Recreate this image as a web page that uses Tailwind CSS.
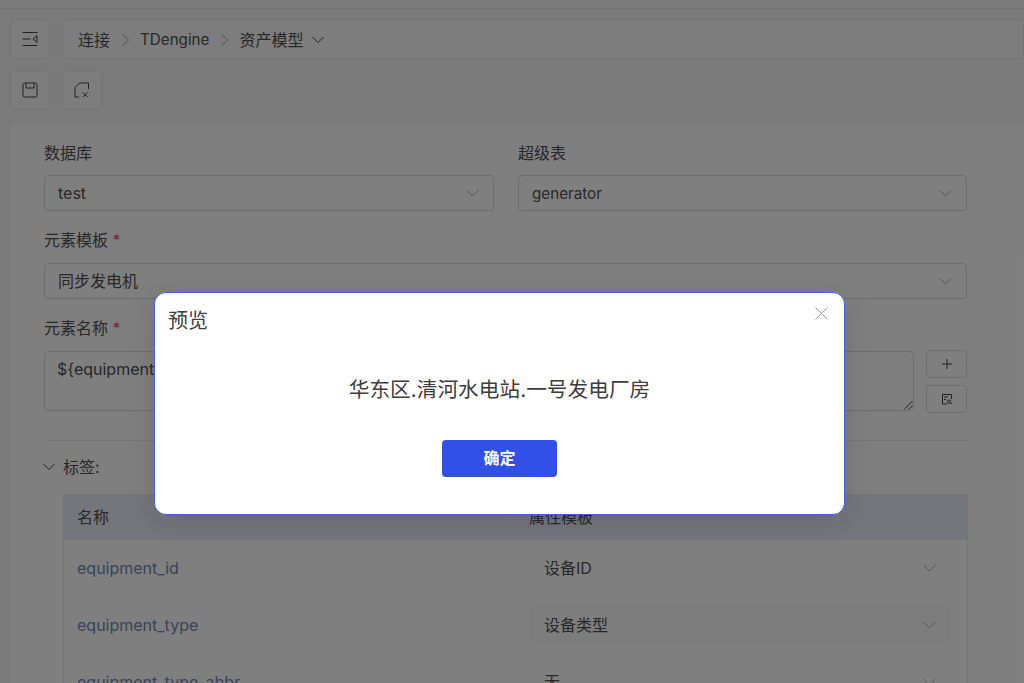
<!DOCTYPE html>
<html lang="zh">
<head>
<meta charset="utf-8">
<script src="https://cdn.jsdelivr.net/npm/@tailwindcss/browser@4"></script>
</head>
<body class="font-['Inter','Noto_Sans_CJK_SC',sans-serif]">
<div class="relative w-[1024px] h-[683px] overflow-hidden bg-[#f5f5f5] text-[16px] text-[#505050]">
  <div class="h-[9px] border-b border-[#e6e6e6] bg-[#f5f5f5]"></div>
  <div class="flex gap-[12px] pl-[10px] mt-[10px]">
    <div class="w-[40px] h-[40px] shrink-0 bg-[#fafafa] border border-[#e8e8e8] rounded-[6px] flex items-center justify-center">
      <svg width="16" height="16" viewBox="0 0 16 16" fill="none" stroke="#444" stroke-width="1"><path d="M0.5 1.5H15.5M0.5 8H8.5M0.5 14.5H15.5M15 4.5L11 8L15 11.5Z"/></svg>
    </div>
    <div class="flex-1 h-[40px] bg-[#fafafa] border border-[#e8e8e8] rounded-l-[6px] flex items-center pl-[15px] pt-[1px]">
      <span>连接</span>
      <svg class="ml-[12px] mr-[11px]" width="7" height="12" viewBox="0 0 7 12" fill="none" stroke="#aaa"><path d="M0.5 0.5L6.5 6L0.5 11.5"/></svg>
      <span class="text-[15.2px] translate-y-[1px]">TDengine</span>
      <svg class="ml-[12px] mr-[11px]" width="7" height="12" viewBox="0 0 7 12" fill="none" stroke="#aaa"><path d="M0.5 0.5L6.5 6L0.5 11.5"/></svg>
      <span>资产模型</span>
      <svg class="ml-[9px]" width="12" height="8" viewBox="0 0 12 8" fill="none" stroke="#444"><path d="M0.5 1L6 6.5L11.5 1"/></svg>
    </div>
  </div>
  <div class="flex gap-[12px] pl-[10px] mt-[11px]">
    <div class="w-[40px] h-[40px] bg-[#fafafa] border border-[#e8e8e8] rounded-[6px] flex items-center justify-center">
      <svg width="16" height="16" viewBox="0 0 16 16" fill="none" stroke="#444"><rect x="1" y="1" width="14" height="14" rx="1.5"/><path d="M4 1V6H12V1" /></svg>
    </div>
    <div class="w-[40px] h-[40px] bg-[#fafafa] border border-[#e8e8e8] rounded-[6px] flex items-center justify-center">
      <svg width="16" height="16" viewBox="0 0 16 16" fill="none" stroke="#444"><path d="M5 15H1V5.5L5.5 1H14.5V7M9 10.5L13.5 15M13.5 10.5L9 15"/></svg>
    </div>
  </div>
  <div class="ml-[10px] mt-[13px] h-[600px] bg-white rounded-tl-[6px] pl-[34px] pr-[57px] pt-[20px]">
    <div class="grid grid-cols-[450px_449px] gap-x-[24px]">
      <div>
        <div class="h-[20px] leading-[20px]">数据库</div>
        <div class="mt-[12px] h-[36px] border border-[#dcdcdc] rounded-[4px] flex items-center justify-between pl-[13px] pr-[14px]"><span>test</span><svg width="13" height="8" viewBox="0 0 13 8" fill="none" stroke="#aaa"><path d="M0.5 1L6.5 7L12.5 1"/></svg></div>
      </div>
      <div>
        <div class="h-[20px] leading-[20px]">超级表</div>
        <div class="mt-[12px] h-[36px] border border-[#dcdcdc] rounded-[4px] flex items-center justify-between pl-[13px] pr-[14px]"><span class="text-[15.2px] translate-y-[1px]">generator</span><svg width="13" height="8" viewBox="0 0 13 8" fill="none" stroke="#aaa"><path d="M0.5 1L6.5 7L12.5 1"/></svg></div>
      </div>
    </div>
    <div class="mt-[19px] h-[20px] leading-[20px]">元素模板 <span class="text-[#e34d59]">*</span></div>
    <div class="mt-[13px] h-[36px] border border-[#dcdcdc] rounded-[4px] flex items-center justify-between pl-[13px] pr-[14px]"><span>同步发电机</span><svg width="13" height="8" viewBox="0 0 13 8" fill="none" stroke="#aaa"><path d="M0.5 1L6.5 7L12.5 1"/></svg></div>
    <div class="mt-[19px] h-[20px] leading-[20px]">元素名称 <span class="text-[#e34d59]">*</span></div>
    <div class="mt-[13px] flex gap-[12px]">
      <div class="relative w-[871px] h-[60px] border border-[#dcdcdc] rounded-[4px] pl-[12px] pt-[7px] leading-[20px]">${equipment_name}
        <svg class="absolute right-0 bottom-0" width="10" height="10" viewBox="0 0 10 10" fill="none" stroke="#444"><path d="M1 9.5L9.5 1M5.5 9.5L9.5 5.5"/></svg>
      </div>
      <div class="flex flex-col gap-[7px] -mt-[1px]">
        <div class="w-[41px] h-[28px] border border-[#dcdcdc] rounded-[4px] flex items-center justify-center"><svg width="12" height="12" viewBox="0 0 12 12" fill="none" stroke="#444"><path d="M6 1V11M1 6H11"/></svg></div>
        <div class="w-[41px] h-[28px] border border-[#dcdcdc] rounded-[4px] flex items-center justify-center"><svg width="12" height="12" viewBox="0 0 12 12" fill="none" stroke="#444"><path d="M6 11H1.5V1.5H10.5V6M3 4H7M3 6.5H5M8 7A1.6 1.6 0 1 0 8 10.2A1.6 1.6 0 1 0 8 7M9.2 9.5L11 11"/></svg></div>
      </div>
    </div>
    <div class="mt-[27px] border-t border-[#eeeeee]"></div>
    <div class="mt-[16px] h-[20px] flex items-center gap-[8px] -ml-[1px]">
      <svg width="12" height="8" viewBox="0 0 12 8" fill="none" stroke="#444"><path d="M0.5 1L6 6.5L11.5 1"/></svg>
      <span>标签:</span>
    </div>
    <div class="mt-[17px] ml-[19px] w-[905px] border-x border-[#e6e8f0]">
      <div class="h-[46px] bg-[#e8edf8] flex items-center">
        <div class="w-[465px] pl-[13px]">名称</div><div>属性模板</div>
      </div>
      <div class="h-[56px] flex items-center">
        <div class="w-[465px] pl-[13px] text-[#7288b5]">equipment_id</div>
        <div class="w-[422px] h-[36px] rounded-[4px] pl-[15px] flex items-center justify-between pr-[15px]"><span>设备ID</span><svg width="13" height="8" viewBox="0 0 13 8" fill="none" stroke="#aaa"><path d="M0.5 1L6.5 7L12.5 1"/></svg></div>
      </div>
      <div class="h-[57px] flex items-center">
        <div class="w-[465px] pl-[13px] text-[#7288b5]">equipment_type</div>
        <div class="w-[422px] h-[36px] bg-[#fafafa] rounded-[4px] pl-[15px] flex items-center justify-between pr-[15px]"><span>设备类型</span><svg width="13" height="8" viewBox="0 0 13 8" fill="none" stroke="#aaa"><path d="M0.5 1L6.5 7L12.5 1"/></svg></div>
      </div>
      <div class="h-[57px] flex items-center">
        <div class="w-[465px] pl-[13px] text-[#7288b5]">equipment_type_abbr</div>
        <div class="w-[422px] h-[36px] rounded-[4px] pl-[15px] flex items-center justify-between pr-[15px]"><span>无</span><svg width="13" height="8" viewBox="0 0 13 8" fill="none" stroke="#aaa"><path d="M0.5 1L6.5 7L12.5 1"/></svg></div>
      </div>
    </div>
  </div>
  <div class="absolute inset-0 bg-black/50"></div>
  <div class="absolute left-[154px] top-[292px] w-[691px] h-[223px] bg-white border border-[#3f5ef0] rounded-[12px] shadow-[0_6px_30px_rgba(0,0,0,0.12)] flex flex-col items-center">
    <div class="self-start pl-[13px] pt-[14px] h-[28px] text-[20px] leading-[28px] text-[#3d3d3d]">预览</div>
    <svg class="absolute right-[16px] top-[14px]" width="13" height="13" viewBox="0 0 13 13" fill="none" stroke="#999"><path d="M0.5 0.5L12.5 12.5M12.5 0.5L0.5 12.5"/></svg>
    <div class="mt-[55px] text-[20.7px] leading-[28px] text-[#3d3d3d]">华东区.清河水电站.一号发电厂房</div>
    <div class="mt-[36px] w-[115px] h-[37px] bg-[#3050e8] rounded-[4px] text-white font-semibold flex items-center justify-center pb-[2px]">确定</div>
  </div>
</div>
</body>
</html>
